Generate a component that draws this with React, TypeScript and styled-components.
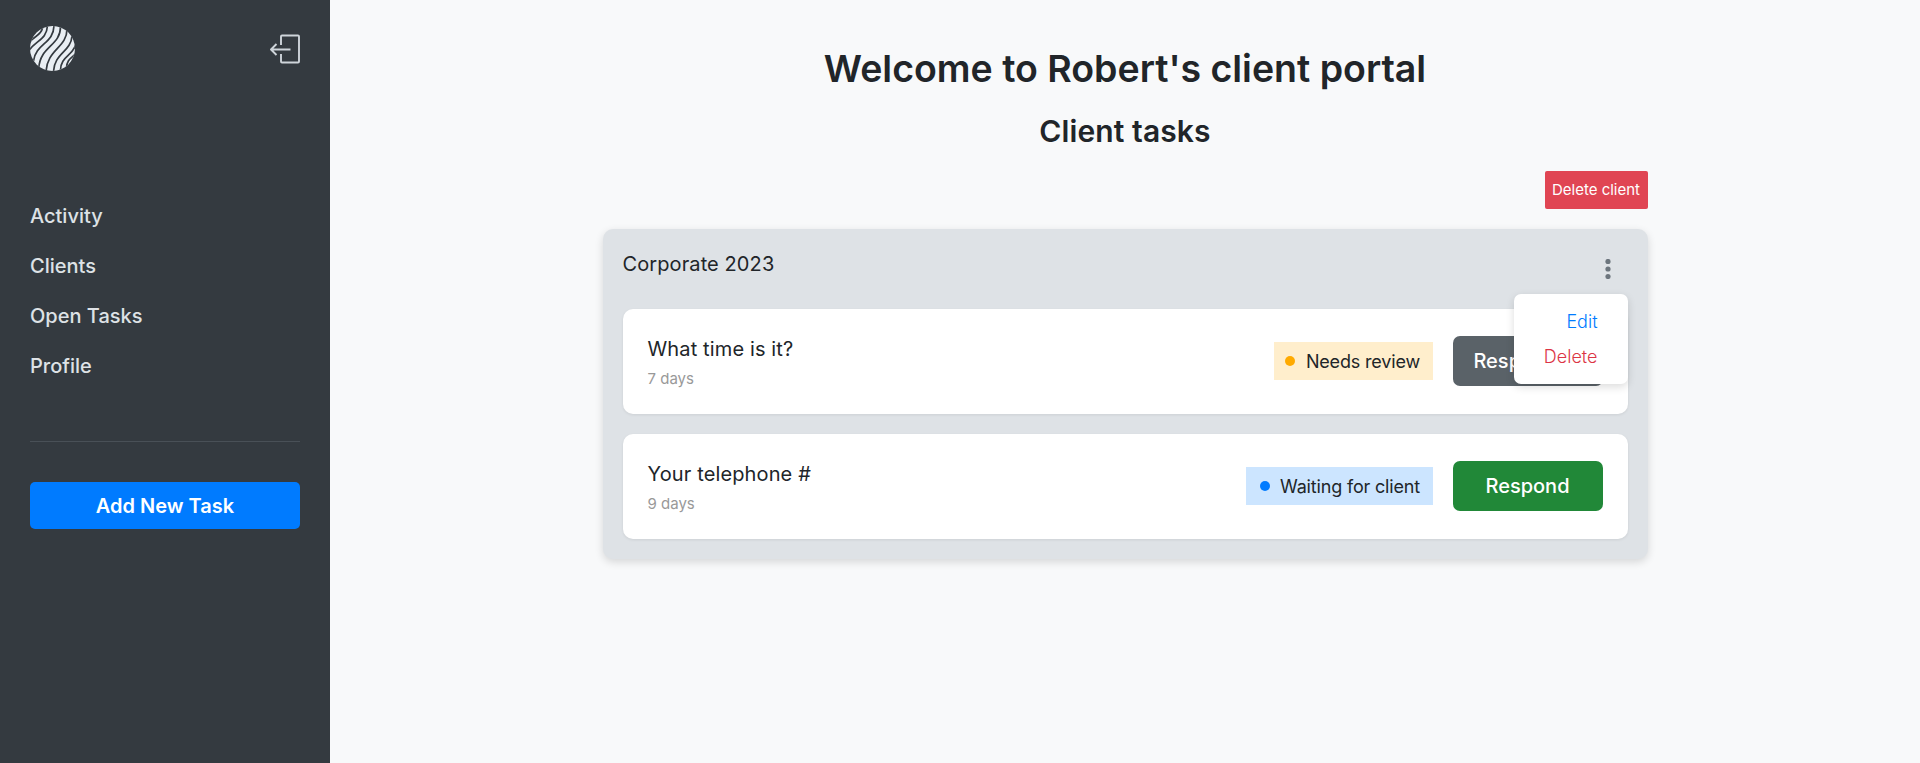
import React from "react";
import styled, { createGlobalStyle } from "styled-components";

const GlobalStyle = createGlobalStyle`
  * { box-sizing: border-box; }
  body {
    margin: 0;
    background: #f8f9fa;
    color: #212529;
    font-family: Inter, "Liberation Sans", sans-serif;
    font-size: 20px;
    line-height: 30px;
  }
  button { font: inherit; border: 0; padding: 0; cursor: pointer; }
  h1, h2, h3, p { margin: 0; padding: 0; }
`;

const Layout = styled.div`
  display: flex;
  min-height: 100vh;
`;

const Sidebar = styled.aside`
  display: flex;
  flex-direction: column;
  flex: 0 0 330px;
  padding: 26px 30px;
  background: #343a40;
`;

const SidebarTop = styled.div`
  display: flex;
  justify-content: space-between;
  align-items: center;
  height: 45px;
  margin-bottom: 129.5px;
`;

const Nav = styled.nav`
  display: flex;
  flex-direction: column;
  gap: 20px;
  padding-bottom: 60px;
  border-bottom: 1px solid #495057;
`;

const NavLink = styled.a`
  color: #dee2e6;
  font-weight: 500;
`;

const AddButton = styled.button`
  height: 47px;
  margin-top: 40px;
  padding-top: 1px;
  border-radius: 5px;
  background: #007bff;
  color: #fff;
  font-weight: 600;
`;

const Main = styled.main`
  display: flex;
  flex-direction: column;
  align-items: center;
  flex: 1;
  padding-top: 45px;
`;

const PageTitle = styled.h1`
  font-size: 37.5px;
  line-height: 48px;
  font-weight: 600;
  letter-spacing: -0.01px;
`;

const PageSubtitle = styled.h2`
  margin-top: 20px;
  font-size: 30px;
  line-height: 36px;
  font-weight: 600;
  letter-spacing: 0.1px;
`;

const Content = styled.section`
  display: flex;
  flex-direction: column;
  width: 1045px;
  margin-top: 22px;
`;

const DeleteClient = styled.button`
  align-self: flex-end;
  width: 103px;
  height: 38px;
  border-radius: 2px;
  background: #e04553;
  color: #fff;
  font-size: 15px;
`;

const Panel = styled.div`
  display: flex;
  flex-direction: column;
  gap: 20px;
  margin-top: 20px;
  padding: 20px;
  border-radius: 10px;
  background: #dee2e6;
  box-shadow: 0 3px 8px rgba(0, 0, 0, 0.14);
`;

const PanelHeader = styled.header`
  position: relative;
  display: flex;
  justify-content: space-between;
  height: 40px;
`;

const PanelTitle = styled.h3`
  font-size: 20px;
  font-weight: 400;
  letter-spacing: 0.1px;
`;

const MenuButton = styled.button`
  display: flex;
  justify-content: center;
  align-items: center;
  width: 40px;
  height: 40px;
  background: none;
`;

const Menu = styled.div`
  position: absolute;
  z-index: 1;
  top: 45px;
  right: 0;
  display: flex;
  flex-direction: column;
  justify-content: center;
  align-items: flex-end;
  gap: 5px;
  width: 114px;
  height: 90px;
  padding-right: 30px;
  border-radius: 7px;
  background: #fff;
  box-shadow: 0 3px 8px rgba(0, 0, 0, 0.14);
`;

const MenuItem = styled.a<{ $color: string }>`
  color: ${({ $color }) => $color};
  font-size: 18px;
  font-weight: 300;
`;

const Card = styled.article`
  display: flex;
  align-items: center;
  gap: 20px;
  height: 105px;
  padding: 0 25px 1px;
  border-radius: 10px;
  background: #fff;
  box-shadow: 0 1px 3px rgba(0, 0, 0, 0.08);
`;

const CardText = styled.div`
  flex: 1;
  padding-top: 5px;
`;

const CardTitle = styled.h3`
  font-size: 20px;
  font-weight: 400;
  letter-spacing: 0.13px;
`;

const CardAge = styled.p`
  color: #999;
  font-size: 15px;
`;

const Status = styled.div<{ $tint: string; $width: number }>`
  display: flex;
  align-items: center;
  justify-content: flex-end;
  gap: 10.5px;
  width: ${({ $width }) => $width}px;
  height: 38px;
  padding-right: 12.5px;
  background: ${({ $tint }) => $tint};
  font-size: 18px;
  letter-spacing: -0.17px;
  white-space: nowrap;
`;

const StatusLabel = styled.span`
  padding-top: 2px;
`;

const Dot = styled.span<{ $color: string }>`
  width: 10px;
  height: 10px;
  border-radius: 50%;
  background: ${({ $color }) => $color};
`;

const ActionButton = styled.button<{ $bg: string }>`
  width: 150px;
  height: 50px;
  border-radius: 7px;
  background: ${({ $bg }) => $bg};
  color: #fff;
  font-weight: 500;
  white-space: nowrap;
`;

const Logo = () => (
  <svg width="45" height="45" viewBox="0 0 45 45">
    <defs>
      <clipPath id="disc">
        <circle cx="22.5" cy="22.5" r="22.5" />
      </clipPath>
    </defs>
    <g clipPath="url(#disc)">
      <rect width="45" height="45" fill="#e9eef3" />
      <g fill="none" stroke="#343a40" strokeWidth="1.7">
        <path d="M12.5 2 C11 9 6 9 0 15.5" />
        <path d="M17.5 -1 C17 14 6 14 -1 24.5" />
        <path d="M24 -1 C24 18 6 17 3.5 35" />
        <path d="M30.5 0 C31 20 10 20 8.8 42" />
        <path d="M37 3 C37 22 17 23 16 46" />
        <path d="M42 10 C41 26 24 27 23.5 46" />
        <path d="M46 18 C42 31 31 30 30.5 44" />
        <path d="M46 27 C43 32 37 32 36.5 42" />
      </g>
    </g>
  </svg>
);

const SignOut = () => (
  <svg width="30" height="32" viewBox="0 0 30 32" fill="none" stroke="#ced4da" strokeWidth="1.9" strokeLinejoin="round">
    <path d="M11 12V3.5q0-1 1-1h16q1 0 1 1v25q0 1-1 1h-16q-1 0-1-1V21" />
    <path d="M20.5 16.5H1M6.5 11L1 16.5L6.5 22" />
  </svg>
);

const Dots = () => (
  <svg width="6" height="20" viewBox="0 0 6 20" fill="#6c757d">
    <circle cx="3" cy="2.5" r="2.6" />
    <circle cx="3" cy="10" r="2.6" />
    <circle cx="3" cy="17.5" r="2.6" />
  </svg>
);

const links = ["Activity", "Clients", "Open Tasks", "Profile"];

const tasks = [
  { title: "What time is it?", age: "7 days", status: "Needs review", width: 159, tint: "#ffeecc", dot: "#ffaa00", action: "Responded", bg: "#5a6268" },
  { title: "Your telephone #", age: "9 days", status: "Waiting for client", width: 187, tint: "#cce5ff", dot: "#007bff", action: "Respond", bg: "#218838" },
];

export default function App() {
  return (
    <>
      <GlobalStyle />
      <Layout>
        <Sidebar>
          <SidebarTop>
            <Logo />
            <SignOut />
          </SidebarTop>
          <Nav>
            {links.map((label) => (
              <NavLink key={label}>{label}</NavLink>
            ))}
          </Nav>
          <AddButton>Add New Task</AddButton>
        </Sidebar>
        <Main>
          <PageTitle>Welcome to Robert's client portal</PageTitle>
          <PageSubtitle>Client tasks</PageSubtitle>
          <Content>
            <DeleteClient>Delete client</DeleteClient>
            <Panel>
              <PanelHeader>
                <PanelTitle>Corporate 2023</PanelTitle>
                <MenuButton aria-label="Project menu">
                  <Dots />
                </MenuButton>
                <Menu>
                  <MenuItem $color="#007bff">Edit</MenuItem>
                  <MenuItem $color="#dc3545">Delete</MenuItem>
                </Menu>
              </PanelHeader>
              {tasks.map((task) => (
                <Card key={task.title}>
                  <CardText>
                    <CardTitle>{task.title}</CardTitle>
                    <CardAge>{task.age}</CardAge>
                  </CardText>
                  <Status $tint={task.tint} $width={task.width}>
                    <Dot $color={task.dot} />
                    <StatusLabel>{task.status}</StatusLabel>
                  </Status>
                  <ActionButton $bg={task.bg}>{task.action}</ActionButton>
                </Card>
              ))}
            </Panel>
          </Content>
        </Main>
      </Layout>
    </>
  );
}
